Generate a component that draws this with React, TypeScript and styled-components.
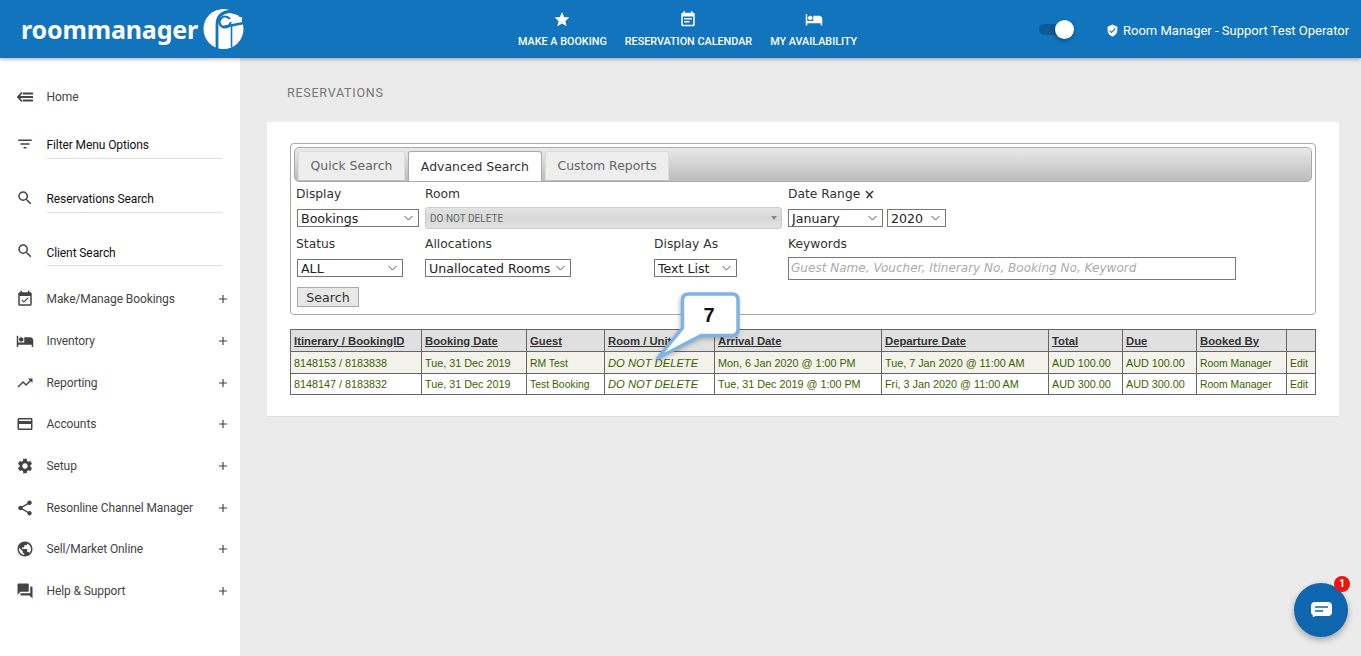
import React from "react";
import styled, { createGlobalStyle } from "styled-components";
import {
  MdStar, MdEventNote, MdHotel, MdVerifiedUser, MdFilterList, MdSearch, MdEventAvailable,
  MdTrendingUp, MdOutlineCreditCard, MdSettings, MdShare, MdPublic, MdForum, MdAdd,
} from "react-icons/md";

const Global = createGlobalStyle`
  html, body { margin: 0; padding: 0; height: 100%; overflow: hidden; background: #ebebeb; }
  * { box-sizing: border-box; }
  #root { height: 100%; }
`;

const Page = styled.div`
  width: 1361px; height: 656px; display: flex; flex-direction: column; position: relative; overflow: hidden;
`;
const Header = styled.header`
  height: 58px; flex: none; background: #1274bd; display: flex; align-items: flex-start; color: #fff;
  box-shadow: 0 1px 4px rgba(0,0,0,.35); position: relative; z-index: 2; font-family: Roboto, sans-serif;
`;
const Logo = styled.div`
  width: 518px; padding: 9px 0 0 21px; display: flex; align-items: flex-start; flex: none;
`;
const LogoText = styled.span`
  font-family: "Noto Sans", sans-serif; font-weight: 700; font-size: 25px; line-height: 40px; letter-spacing: -.15px; color: #fff; margin-right: 8px; width: 174px; white-space: nowrap;
`;
const Nav = styled.nav` display: flex; gap: 18px; width: 521px; flex: none; `;
const NavItem = styled.div`
  display: flex; flex-direction: column; align-items: center; padding-top: 10px;
  font-size: 10.8px; font-weight: 500; line-height: 13px; text-transform: uppercase; white-space: nowrap;
  svg { font-size: 18px; display: block; margin-bottom: 6px; height: 19px; }
`;
const Toggle = styled.div`
  width: 35px; height: 20px; margin-top: 19px; position: relative; flex: none;
  &::before { content: ""; position: absolute; left: 0; top: 5px; width: 30px; height: 11px; border-radius: 6px; background: #0e5a96; }
  &::after { content: ""; position: absolute; right: 0; top: 1px; width: 19px; height: 19px; border-radius: 50%; background: #fff; box-shadow: 0 2px 4px rgba(0,0,0,.3); }
`;
const User = styled.div`
  margin-left: 32px; margin-top: 22px; font-size: 13px; line-height: 17px; display: flex; align-items: center; gap: 4px; white-space: nowrap;
  svg { font-size: 13px; }
`;

const Body = styled.div` flex: 1; display: flex; min-height: 0; `;
const Sidebar = styled.aside`
  width: 240px; flex: none; background: #fff; font-family: Roboto, sans-serif; font-size: 12px; letter-spacing: -.1px; color: #444; padding-top: 17px;
`;
const HomeRow = styled.div`
  height: 44px; display: flex; align-items: center;
  padding-left: 17px; gap: 13.5px;
`;
const IconSlot = styled.span`
  width: 16px; height: 18px; flex: none; display: flex; align-items: center; justify-content: center; color: #444;
  svg { font-size: 18px; flex: none; }
`;
const SearchRow = styled.div<{ $h: number }>`
  height: ${p => p.$h}px; display: flex; align-items: flex-end; padding-left: 17px; color: #111;
`;
const SearchLabel = styled.div`
  display: flex; align-items: flex-end; gap: 13.5px; width: 205px; padding-bottom: 6px;
`;
const Underlined = styled.span`
  flex: 1; margin-bottom: -6px; padding-bottom: 6px; border-bottom: 1px solid #ddd; line-height: 14px;
`;
const ClientUnderlined = styled(Underlined)`
  padding-bottom: 5px;
`;
const MenuRow = styled.div`
  height: 41.7px; display: flex; align-items: center; padding-left: 17px; gap: 13.5px;
`;
const MenuText = styled.span` flex: 1; `;
const Plus = styled.span`
  width: 14px; margin-right: 10px; display: flex; color: #444;
  svg { font-size: 14px; }
`;
const MenuList = styled.div` margin-top: 12.5px; `;

const Main = styled.main`
  flex: 1; padding: 27px 22px 0 27px; font-family: "DejaVu Sans", Verdana, sans-serif; min-width: 0;
`;
const Title = styled.h1`
  margin: 0 0 22px 20px; font-family: Roboto, sans-serif; font-weight: 400; font-size: 12.5px; line-height: 15px; letter-spacing: .76px; color: #777;
`;
const Card = styled.section`
  background: #fff; height: 295px; padding: 21px 23px; border-bottom: 1px solid #ddd; position: relative;
`;
const Fieldset = styled.div`
  height: 172px; border: 1px solid #aaa; border-radius: 4px; padding: 3px 3px 0;
`;
const TabBar = styled.div`
  height: 35px; border: 1px solid #aaa; border-radius: 5px; background: linear-gradient(#e9e9e9, #bcbcbc);
  display: flex; align-items: flex-end; padding-left: 3px; gap: 3px;
`;
const Tab = styled.div<{ $active?: boolean }>`
  height: ${p => (p.$active ? 30 : 29)}px; margin-bottom: ${p => (p.$active ? 0 : 1)}px; padding: 0 ${p => (p.$active ? 12 : 11.5)}px ${p => (p.$active ? 0 : 1)}px; display: flex; align-items: center;
  font-size: 12.45px; border-radius: 3px 3px 0 0;
  color: ${p => (p.$active ? "#333" : "#666")};
  background: ${p => (p.$active ? "#fff" : "#eee")};
  border: 1px solid ${p => (p.$active ? "#aaa" : "#ddd")};
  border-bottom: 0;
`;
const FormGrid = styled.div`
  display: grid; grid-template-columns: 129px 229px 134px 1fr; grid-auto-rows: 50px; padding: 2px 0 0 2px; color: #333;
  font-size: 12.3px;
`;
const Field = styled.div<{ $span?: number }>`
  grid-column: span ${p => p.$span ?? 1}; display: flex; flex-direction: column; align-items: flex-start;
`;
const Label = styled.label`
  display: flex; align-items: center; gap: 5px; height: 20px; line-height: 20px; white-space: nowrap;
  svg { width: 9px; height: 9px; }
`;
const Controls = styled.div` height: 28px; display: flex; align-items: center; gap: 4px; `;
const arrow = `url("data:image/svg+xml,%3Csvg xmlns='http://www.w3.org/2000/svg' width='9' height='6'%3E%3Cpath d='M.5 1l4 4 4-4' fill='none' stroke='%23555' stroke-width='1'/%3E%3C/svg%3E")`;
const Select = styled.select<{ $w: number; $ml?: number }>`
  appearance: none; -webkit-appearance: none;
  width: ${p => p.$w}px; height: 18px; margin-left: ${p => p.$ml ?? 0}px; border: 1px solid #767676; border-radius: 0;
  background: #fff ${arrow} no-repeat right 5px center;
  font-family: "DejaVu Sans", Verdana, sans-serif; font-size: 12.6px; color: #222; padding: 0 0 0 3px;
`;
const RoomBox = styled.div`
  width: 357px; height: 22px; border: 1px solid #ccc; border-radius: 3px; background: linear-gradient(#e4e4e4, #d8d8d8 50%, #e2e2e2);
  font-family: Roboto, sans-serif; font-size: 10px; color: #666; display: flex; align-items: center; justify-content: space-between; padding: 0 4px;
  &::after { content: ""; border: 3.5px solid transparent; border-top: 4px solid #888; margin-top: 3px; }
`;
const KeywordInput = styled.input`
  width: 448px; height: 23px; border: 1px solid #767676; padding: 0 2px; font-family: "DejaVu Sans", Verdana, sans-serif; font-size: 12.05px;
  &::placeholder { color: #aaa; font-style: italic; }
`;
const SearchButton = styled.button`
  display: block; margin: 3px 0 0 3px; width: 62px; height: 20px; border: 1px solid #aaa; background: #e7e7e7; padding: 0;
  font-family: "DejaVu Sans", Verdana, sans-serif; font-size: 12.6px; color: #333;
`;
const Table = styled.table`
  margin-top: 14px; width: 1025px; table-layout: fixed; border-collapse: collapse; font-family: "Liberation Sans", Arial, sans-serif; font-size: 10.8px; color: #3a5f00;
  th, td { border: 1px solid #666; padding: 0 3px; text-align: left; white-space: nowrap; overflow: hidden; }
  th { height: 22px; background: #e0e0e0; color: #333; font-size: 11.3px; font-weight: 700; text-decoration: underline; }
  td { height: 21.5px; }
  tbody tr:first-child td { background: #f3f3eb; padding-top: 2px; }
`;
const RoomCell = styled.td`
  && { font-style: italic; font-size: 11.2px; }
`;
const SmallCell = styled.td`
  && { font-size: 10.4px; padding-top: 1px; }
`;
const Callout = styled.div`
  position: absolute; left: 390px; top: 170px; width: 85px; height: 70px;
  svg { position: absolute; inset: 0; overflow: visible; }
`;
const CalloutNum = styled.span`
  position: absolute; left: 24px; top: 11px; width: 56px; text-align: center;
  font-family: "Liberation Sans", Arial, sans-serif; font-weight: 700; font-size: 20px; line-height: 24px; color: #111;
`;
const Chat = styled.div`
  position: absolute; left: 1294px; top: 583px; width: 54px; height: 54px; border-radius: 50%; background: #0d66ae;
  box-shadow: 0 3px 6px rgba(0,0,0,.3); display: flex; align-items: center; justify-content: center; padding-bottom: 2px;
`;
const Badge = styled.span`
  position: absolute; right: -2px; top: -7px; width: 16px; height: 16px; border-radius: 50%; background: #ee1510; color: #fff;
  font-family: Roboto, sans-serif; font-size: 10px; font-weight: 700; line-height: 16px; text-align: center;
`;

const Chevron = () => (
  <svg viewBox="0 0 10 10"><path d="M1 1l4 4 4-4M2 9l3-4 3 4" stroke="#333" strokeWidth="1.6" fill="none" /></svg>
);

const HomeIcon = () => (
  <svg viewBox="0 0 18 18" width="18" height="18">
    <path d="M6 4.5L2 9l4 4.5" stroke="#444" strokeWidth="1.8" fill="none" />
    <path d="M2.5 9H17M7 5.5H17M7 12.5H17" stroke="#444" strokeWidth="1.8" fill="none" />
  </svg>
);

const LogoMark = () => (
  <svg width="42" height="40" viewBox="0 0 42 40">
    <circle cx="20.5" cy="20" r="20" fill="#fff" />
    <path d="M14 41V16Q14 4 26 2.5L38 1" stroke="#1274bd" strokeWidth="2.8" fill="none" />
    <path d="M27 0H42V8L27 4Z" fill="#1274bd" />
    <circle cx="22" cy="13" r="5.5" fill="#fff" stroke="#1274bd" strokeWidth="2.2" />
    <path d="M20 18L41 14" stroke="#1274bd" strokeWidth="2.6" />
    <path d="M22 12.5L39 9.5" stroke="#fff" strokeWidth="3" />
    <path d="M28.5 17V38" stroke="#1274bd" strokeWidth="1.6" />
  </svg>
);

const menu: [React.ReactNode, string][] = [
  [<MdEventAvailable />, "Make/Manage Bookings"],
  [<MdHotel />, "Inventory"],
  [<MdTrendingUp />, "Reporting"],
  [<MdOutlineCreditCard />, "Accounts"],
  [<MdSettings />, "Setup"],
  [<MdShare />, "Resonline Channel Manager"],
  [<MdPublic />, "Sell/Market Online"],
  [<MdForum />, "Help & Support"],
];

const rows = [
  ["8148153 / 8183838", "Tue, 31 Dec 2019", "RM Test", "Mon, 6 Jan 2020 @ 1:00 PM", "Tue, 7 Jan 2020 @ 11:00 AM", "AUD 100.00", "AUD 100.00"],
  ["8148147 / 8183832", "Tue, 31 Dec 2019", "Test Booking", "Tue, 31 Dec 2019 @ 1:00 PM", "Fri, 3 Jan 2020 @ 11:00 AM", "AUD 300.00", "AUD 300.00"],
];

export default function App() {
  return (
    <Page>
      <Global />
      <Header>
        <Logo>
          <LogoText>roommanager</LogoText>
          <LogoMark />
        </Logo>
        <Nav>
          <NavItem><MdStar />Make a Booking</NavItem>
          <NavItem><MdEventNote />Reservation Calendar</NavItem>
          <NavItem><MdHotel />My Availability</NavItem>
        </Nav>
        <Toggle />
        <User><MdVerifiedUser />Room Manager - Support Test Operator</User>
      </Header>
      <Body>
        <Sidebar>
          <HomeRow><IconSlot><HomeIcon /></IconSlot>Home</HomeRow>
          <SearchRow $h={40}>
            <SearchLabel><IconSlot><MdFilterList /></IconSlot><Underlined>Filter Menu Options</Underlined></SearchLabel>
          </SearchRow>
          <SearchRow $h={54}>
            <SearchLabel><IconSlot><MdSearch /></IconSlot><Underlined>Reservations Search</Underlined></SearchLabel>
          </SearchRow>
          <SearchRow $h={53}>
            <SearchLabel><IconSlot><MdSearch /></IconSlot><ClientUnderlined>Client Search</ClientUnderlined></SearchLabel>
          </SearchRow>
          <MenuList>
            {menu.map(([icon, label]) => (
              <MenuRow key={label}>
                <IconSlot>{icon}</IconSlot>
                <MenuText>{label}</MenuText>
                <Plus><MdAdd /></Plus>
              </MenuRow>
            ))}
          </MenuList>
        </Sidebar>
        <Main>
          <Title>RESERVATIONS</Title>
          <Card>
            <Fieldset>
              <TabBar>
                <Tab>Quick Search</Tab>
                <Tab $active>Advanced Search</Tab>
                <Tab>Custom Reports</Tab>
              </TabBar>
              <FormGrid>
                <Field>
                  <Label>Display</Label>
                  <Controls><Select $w={122} $ml={1}><option>Bookings</option></Select></Controls>
                </Field>
                <Field $span={2}>
                  <Label>Room</Label>
                  <Controls><RoomBox>DO NOT DELETE</RoomBox></Controls>
                </Field>
                <Field>
                  <Label>Date Range <Chevron /></Label>
                  <Controls>
                    <Select $w={95}><option>January</option></Select>
                    <Select $w={59}><option>2020</option></Select>
                  </Controls>
                </Field>
                <Field>
                  <Label>Status</Label>
                  <Controls><Select $w={106} $ml={1}><option>ALL</option></Select></Controls>
                </Field>
                <Field>
                  <Label>Allocations</Label>
                  <Controls><Select $w={146}><option>Unallocated Rooms</option></Select></Controls>
                </Field>
                <Field>
                  <Label>Display As</Label>
                  <Controls><Select $w={83}><option>Text List</option></Select></Controls>
                </Field>
                <Field>
                  <Label>Keywords</Label>
                  <Controls><KeywordInput placeholder="Guest Name, Voucher, Itinerary No, Booking No, Keyword" /></Controls>
                </Field>
              </FormGrid>
              <SearchButton>Search</SearchButton>
            </Fieldset>
            <Table>
              <colgroup>
                {[131, 105, 78, 110, 167, 167, 74, 74, 90, 29].map((w, i) => <col key={i} style={{ width: w }} />)}
              </colgroup>
              <thead>
                <tr>
                  <th>Itinerary / BookingID</th><th>Booking Date</th><th>Guest</th><th>Room / Unit</th>
                  <th>Arrival Date</th><th>Departure Date</th><th>Total</th><th>Due</th><th>Booked By</th><th></th>
                </tr>
              </thead>
              <tbody>
                {rows.map(r => (
                  <tr key={r[0]}>
                    <td>{r[0]}</td><td>{r[1]}</td><SmallCell>{r[2]}</SmallCell>
                    <RoomCell>DO NOT DELETE</RoomCell>
                    <td>{r[3]}</td><td>{r[4]}</td><td>{r[5]}</td><td>{r[6]}</td>
                    <SmallCell>Room Manager</SmallCell><SmallCell>Edit</SmallCell>
                  </tr>
                ))}
              </tbody>
            </Table>
            <Callout>
              <svg width="85" height="70" viewBox="0 0 85 70">
                <path d="M32 2H75Q81 2 81 8V37Q81 43.5 75 43.5H44L1 66L25.5 36V8Q25.5 2 32 2Z" fill="#fff" stroke="#7fb3e6" strokeWidth="3.5" strokeLinejoin="round" style={{ filter: "drop-shadow(-1px 2px 2px rgba(0,0,0,.25))" }} />
              </svg>
              <CalloutNum>7</CalloutNum>
            </Callout>
          </Card>
        </Main>
      </Body>
      <Chat>
        <svg width="21" height="15" viewBox="0 0 21 15">
          <path d="M4 0H17Q21 0 21 4V10Q21 14 17 14H5L1.5 15L2 13.5Q0 12.5 0 10V4Q0 0 4 0Z" fill="#fff" />
          <path d="M4 5H17M4 9H12" stroke="#0d66ae" strokeWidth="1.4" />
        </svg>
        <Badge>1</Badge>
      </Chat>
    </Page>
  );
}
